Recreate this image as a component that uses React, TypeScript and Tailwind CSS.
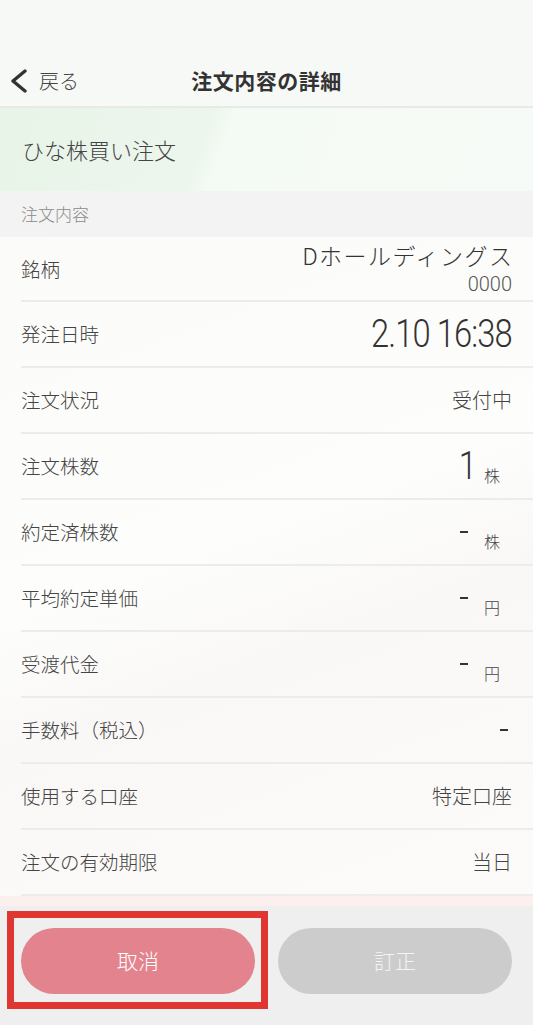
type Row = { label: string; value: string; unit?: string; big?: boolean };

const rows: Row[] = [
  { label: "発注日時", value: "2.10 16:38", big: true },
  { label: "注文状況", value: "受付中" },
  { label: "注文株数", value: "1", unit: "株", big: true },
  { label: "約定済株数", value: "-", unit: "株" },
  { label: "平均約定単価", value: "-", unit: "円" },
  { label: "受渡代金", value: "-", unit: "円" },
  { label: "手数料（税込）", value: "-" },
  { label: "使用する口座", value: "特定口座" },
  { label: "注文の有効期限", value: "当日" },
];

const jp = "font-['Noto_Sans_CJK_JP','Noto_Sans',sans-serif]";
const num = "font-['Roboto','Noto_Sans_CJK_JP',sans-serif]";

export default function App() {
  return (
    <div className={`w-[533px] h-[1025px] flex flex-col bg-[#f7f9f7] text-[#444] ${jp} overflow-hidden`}>
      {/* status bar space */}
      <div className="h-[55px] shrink-0" />

      {/* header */}
      <div className="h-[53px] shrink-0 relative flex items-center border-b-2 border-[#e6ebe6]">
        <div className="flex items-center pl-[10px]">
          <svg width="18" height="24" viewBox="0 0 18 24" className="text-[#333]">
            <polyline points="15,2 3,12 15,22" fill="none" stroke="currentColor" strokeWidth="3.4" strokeLinecap="round" strokeLinejoin="round" />
          </svg>
          <span className="ml-[11px] text-[20px] text-[#444] font-light">戻る</span>
        </div>
        <div className="absolute inset-x-0 text-center text-[21px] tracking-[0.5px] font-bold text-[#333] pointer-events-none">
          注文内容の詳細
        </div>
      </div>

      {/* order type */}
      <div className="h-[83px] shrink-0 flex items-center pl-[22px] bg-[linear-gradient(110deg,#e9f4e9_0%,#ecf6ec_38%,#f4faf4_42%,#f7fbf7_100%)]">
        <span className="text-[22px] text-[#444] font-light">ひな株買い注文</span>
      </div>

      {/* section header */}
      <div className="h-[46px] shrink-0 flex items-center pl-[21px] bg-[#f3f3f3]">
        <span className="text-[17px] text-[#8a8a8a] font-light">注文内容</span>
      </div>

      {/* details */}
      <div className="flex-1 flex flex-col bg-[linear-gradient(160deg,#fbfbfa_0%,#fdfdfc_45%,#f9f8f6_60%,#fcfbfa_100%)]">
        <div className="h-[65px] ml-[21px] pr-[21px] flex items-center justify-between border-b-2 border-[#ececec]">
          <span className="text-[19.5px] font-light">銘柄</span>
          <div className="flex flex-col items-end leading-none">
            <span className="text-[23px] tracking-[1.5px] text-[#333] font-light mr-[-1.5px]">Dホールディングス</span>
            <span className={`${num} text-[20px] text-[#555] font-light mt-[7px]`}>0000</span>
          </div>
        </div>
        {rows.map((r, i) => (
          <div
            key={i}
            className="h-[66px] ml-[21px] pr-[21px] flex items-center justify-between border-b-2 border-[#ececec] last:border-b-0"
          >
            <span className="text-[19.5px] font-light">{r.label}</span>
            <div className="flex items-center leading-none">
              {r.big ? (
                <span className={`${num} text-[38px] font-light text-[#333] tracking-[-1px] scale-x-[0.86] origin-right`}>{r.value}</span>
              ) : r.value === "-" ? (
                <span className={`block w-[8px] h-[2px] bg-[#333] ${r.unit ? "" : "mr-[4px]"}`} />
              ) : (
                <span className="text-[20px] text-[#444] font-light">{r.value}</span>
              )}
              {r.unit && (
                <span className={`${r.big ? "ml-[8px]" : "ml-[16px]"} mr-[12px] mt-[18px] text-[16px] text-[#444] font-light`}>{r.unit}</span>
              )}
            </div>
          </div>
        ))}
        <div className="flex-1" />
        <div className="h-[10px] bg-[#fbf0ee]" />
      </div>

      {/* footer */}
      <div className="h-[120px] shrink-0 bg-[#efefef] flex gap-[23px] px-[21px] pt-[22px]">
        <div className="relative flex-1">
          <button className="w-full h-[66px] rounded-full bg-[#e3838e] text-white text-[21px] font-light">取消</button>
          <div className="absolute -left-[14px] -top-[17px] -right-[13px] h-[98px] border-[7px] border-[#e03631] pointer-events-none" />
        </div>
        <button className="flex-1 h-[66px] rounded-full bg-[#cccccc] text-[#f4f4f4] text-[21px] font-light">訂正</button>
      </div>
    </div>
  );
}
